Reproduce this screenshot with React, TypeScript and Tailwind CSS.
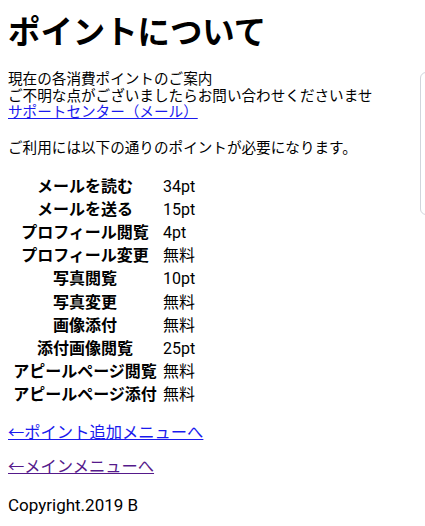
const ROWS = [
  { label: "メールを読む", value: "34pt" },
  { label: "メールを送る", value: "15pt" },
  { label: "プロフィール閲覧", value: "4pt" },
  { label: "プロフィール変更", value: "無料" },
  { label: "写真閲覧", value: "10pt" },
  { label: "写真変更", value: "無料" },
  { label: "画像添付", value: "無料" },
  { label: "添付画像閲覧", value: "25pt" },
  { label: "アピールページ閲覧", value: "無料" },
  { label: "アピールページ添付", value: "無料" },
];

export default function App() {
  return (
    <div className="relative min-h-[526px] overflow-hidden bg-white px-2 pt-2 text-black [font-family:Roboto,'Noto_Sans_CJK_JP',sans-serif]">
      <h1 className="text-[32.4px] font-bold leading-[43px] [font-family:'Noto_Sans_CJK_JP',sans-serif]">
        ポイントについて
      </h1>

      <p className="mt-5 text-[14.6px] leading-[16.5px]">
        現在の各消費ポイントのご案内
        <br />
        ご不明な点がございましたらお問い合わせくださいませ
        <br />
        <a href="#" className="text-[#1a1aee] underline">
          サポートセンター（メール）
        </a>
      </p>

      <p className="mt-[19px] text-[14.6px] leading-[16.5px]">
        ご利用には以下の通りのポイントが必要になります。
      </p>

      <div className="ml-1 mt-[19px] grid grid-cols-[146px_auto] gap-x-[5px] text-[16px]">
        {ROWS.map((r) => (
          <div key={r.label} className="contents">
            <div className="flex h-[23.2px] items-center justify-center whitespace-nowrap font-bold">
              {r.label}
            </div>
            <div className="flex h-[23.2px] items-center">{r.value}</div>
          </div>
        ))}
      </div>

      <p className="mt-[17px] text-[16.3px] leading-[18px]">
        <a href="#" className="text-[#1a1aee] underline">
          ←ポイント追加メニューへ
        </a>
      </p>
      <p className="mt-4 text-[16.3px] leading-[18px]">
        <a href="#" className="text-[#551a8b] underline">
          ←メインメニューへ
        </a>
      </p>
      <p className="mt-[20px] text-[17px] leading-[18px]">Copyright.2019 B</p>

      <div className="absolute left-[420px] top-[72px] h-[143px] w-5 rounded-md border border-gray-300" />
    </div>
  );
}
